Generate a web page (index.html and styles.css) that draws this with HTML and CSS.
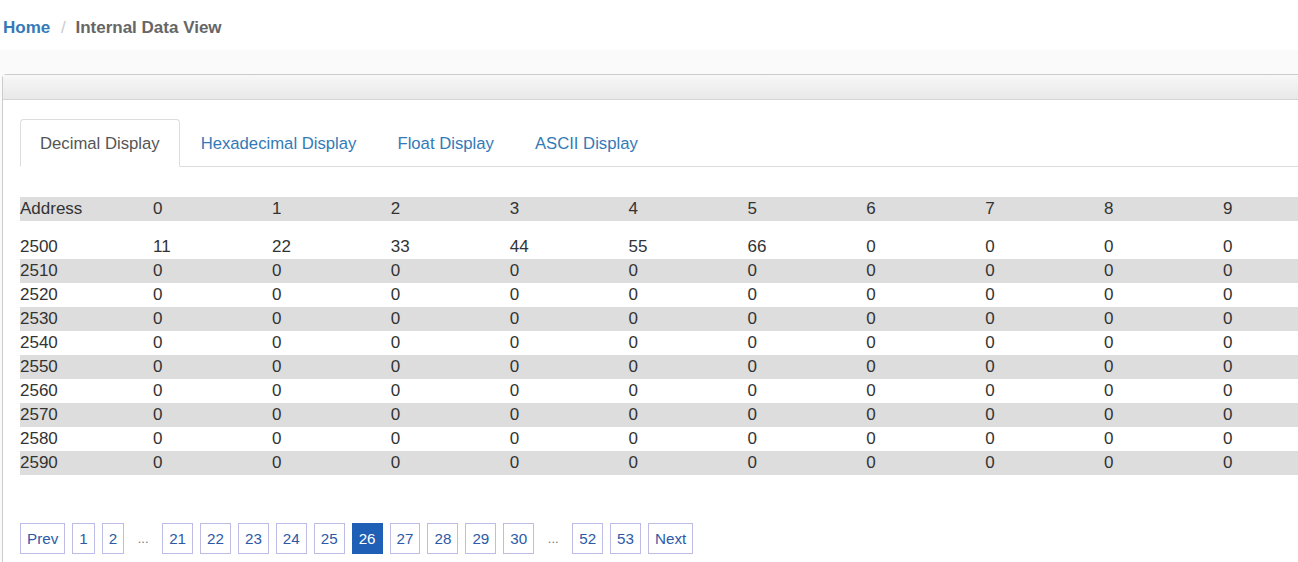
FILE: index.html
```html
<!DOCTYPE html>
<html lang="en">
<head>
  <meta charset="UTF-8" />
  <title>Internal Data View</title>
  <link rel="stylesheet" href="styles.css">
</head>
<body>
  <div class="breadcrumb">
    <a href="#">Home</a>
    <span class="sep">/</span>
    <span class="current">Internal Data View</span>
  </div>

  <div class="panel">
    <div class="panel-heading"></div>
    <div class="panel-body">
      <ul class="tabs">
        <li class="active"><a href="#">Decimal Display</a></li>
        <li><a href="#">Hexadecimal Display</a></li>
        <li><a href="#">Float Display</a></li>
        <li><a href="#">ASCII Display</a></li>
      </ul>

      <table class="data-table">
        <thead>
          <tr>
            <th>Address</th><th>0</th><th>1</th><th>2</th><th>3</th><th>4</th><th>5</th><th>6</th><th>7</th><th>8</th><th>9</th>
          </tr>
        </thead>
        <tbody id="rows"></tbody>
      </table>

      <div class="pagination">
        <a href="#" class="page">Prev</a>
        <a href="#" class="page">1</a>
        <a href="#" class="page">2</a>
        <span class="dots">...</span>
        <a href="#" class="page">21</a>
        <a href="#" class="page">22</a>
        <a href="#" class="page">23</a>
        <a href="#" class="page">24</a>
        <a href="#" class="page">25</a>
        <a href="#" class="page active">26</a>
        <a href="#" class="page">27</a>
        <a href="#" class="page">28</a>
        <a href="#" class="page">29</a>
        <a href="#" class="page">30</a>
        <span class="dots">...</span>
        <a href="#" class="page">52</a>
        <a href="#" class="page">53</a>
        <a href="#" class="page">Next</a>
      </div>
    </div>
  </div>

  <script>
    const values = {2500: [11, 22, 33, 44, 55, 66, 0, 0, 0, 0]};
    const body = document.getElementById("rows");
    for (let addr = 2500; addr <= 2590; addr += 10) {
      const vals = values[addr] || [0, 0, 0, 0, 0, 0, 0, 0, 0, 0];
      const tr = document.createElement("tr");
      tr.innerHTML = `<td>${addr}</td>` + vals.map(v => `<td>${v}</td>`).join("");
      body.appendChild(tr);
    }
  </script>
</body>
</html>
```

FILE: styles.css
```css
body {
  margin: 0;
  font-family: "Liberation Sans", Arial, sans-serif;
  color: #333;
  background-color: #fafafa;
  overflow: hidden;
}

a {
  text-decoration: none;
}

.breadcrumb {
  height: 50px;
  box-sizing: border-box;
  padding: 18px 3px 0;
  background: #fff;
  font-size: 17px;
  font-weight: bold;
}

.breadcrumb a {
  color: #337ab7;
}

.breadcrumb .sep {
  color: #ccc;
  font-weight: normal;
  margin: 0 5px 0 6px;
}

.breadcrumb .current {
  color: #666;
}

.panel {
  margin: 24px 0 0 2px;
  width: 1400px;
  border: 1px solid #ccc;
  border-radius: 4px 0 0 0;
  background: #fff;
}

.panel-heading {
  height: 24px;
  background: linear-gradient(#f7f7f7, #e9e9e9);
  border-bottom: 1px solid #d4d4d4;
}

.panel-body {
  padding: 19px 17px 20px;
}

.tabs {
  display: flex;
  list-style: none;
  margin: 0;
  padding: 0;
  border-bottom: 1px solid #ddd;
  font-size: 16.7px;
}

.tabs li {
  margin-right: 1px;
  margin-bottom: -1px;
}

.tabs a {
  display: block;
  height: 48px;
  line-height: 48px;
  padding: 0 19px;
  color: #337ab7;
  border: 1px solid transparent;
  border-radius: 4px 4px 0 0;
  box-sizing: border-box;
}

.tabs li.active a {
  color: #555;
  background: #fff;
  border-color: #ddd #ddd transparent;
}

.data-table {
  margin-top: 30px;
  border-collapse: collapse;
  table-layout: fixed;
  width: 1322px;
  font-size: 17px;
}

.data-table th,
.data-table td {
  width: 118.8px;
  height: 24px;
  padding: 0;
  text-align: left;
  font-weight: normal;
}

.data-table th:first-child {
  width: 133px;
}

.data-table thead tr {
  background: #dddddd;
}

.data-table thead th {
  border-bottom: 14px solid #fff;
}

.data-table tbody tr:nth-child(even) {
  background: #dddddd;
}

.pagination {
  display: flex;
  align-items: center;
  gap: 7px;
  margin-top: 48px;
  font-size: 15.2px;
}

.page {
  display: block;
  height: 31px;
  line-height: 29px;
  padding: 0 6px;
  box-sizing: border-box;
  border: 1px solid #bcbce6;
  color: #2c5aa8;
  background: #fff;
}

.page.active {
  background: #1f5fb5;
  border-color: #1f5fb5;
  color: #fff;
}

.dots {
  width: 24px;
  text-align: center;
  color: #777;
  font-size: 13px;
}
```
